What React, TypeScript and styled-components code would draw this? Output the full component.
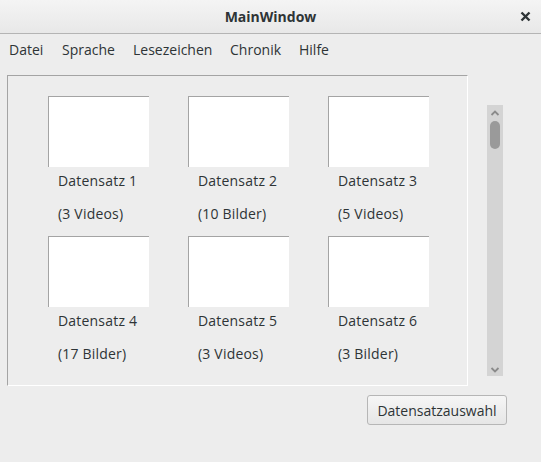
import React from "react";
import styled, { createGlobalStyle } from "styled-components";

const Global = createGlobalStyle`
  html, body { margin: 0; padding: 0; background: #ededed; }
  body { font-family: "Open Sans", "Noto Sans", sans-serif; color: #2e3436; }
  * { box-sizing: border-box; }
`;

const Window = styled.div`
  width: 541px;
  height: 462px;
  background: #ededed;
  display: flex;
  flex-direction: column;
  overflow: hidden;
`;

const TitleBar = styled.div`
  height: 34px;
  border-bottom: 1px solid #b4b4b4;
  background: linear-gradient(#f4f4f4, #e8e8e8);
  display: flex;
  align-items: center;
  justify-content: center;
  position: relative;
  font-weight: 700;
  font-size: 14px;
  color: #2e3436;
`;

const Close = styled.div`
  position: absolute;
  right: 10px;
  top: 9px;
  width: 12px;
  height: 14px;
  display: flex;
  align-items: center;
  justify-content: center;
`;

const MenuBar = styled.div`
  height: 31px;
  display: flex;
  align-items: center;
  padding-left: 9px;
  font-size: 14px;
`;

const MenuItem = styled.span<{ $w: number }>`
  width: ${(p) => p.$w}px;
  white-space: nowrap;
`;

const Main = styled.div`
  display: flex;
  flex-direction: column;
  padding: 10px 0 0 7px;
`;

const Row = styled.div`
  display: flex;
  align-items: flex-start;
`;

const Frame = styled.div`
  width: 461px;
  height: 311px;
  border-top: 1px solid #a4a4a4;
  border-left: 1px solid #a4a4a4;
  border-right: 1px solid #ffffff;
  border-bottom: 1px solid #ffffff;
  overflow: hidden;
  padding: 20px 0 0 40px;
`;

const Grid = styled.div`
  display: grid;
  grid-template-columns: repeat(3, 140px);
  grid-auto-rows: 140px;
`;

const Cell = styled.div`
  display: flex;
  flex-direction: column;
`;

const Thumb = styled.div`
  width: 101px;
  height: 71px;
  background: #fff;
  border-top: 1px solid #a4a4a4;
  border-left: 1px solid #a4a4a4;
`;

const Label = styled.div`
  font-size: 14px;
  line-height: 20px;
  padding-left: 10px;
  margin-top: 4px;
  letter-spacing: 0.2px;
  white-space: nowrap;
`;

const SubLabel = styled(Label)`
  margin-top: 13px;
`;

const ScrollBar = styled.div`
  margin-left: 19px;
  margin-top: 30px;
  width: 16px;
  height: 271px;
  background: #d4d4d4;
  display: flex;
  flex-direction: column;
  align-items: center;
  justify-content: space-between;
  padding: 5px 0 3px;
`;

const Thumbbar = styled.div`
  width: 10px;
  height: 28px;
  border-radius: 5px;
  background: #9a9a9a;
  margin-top: 5px;
`;

const Top = styled.div`
  display: flex;
  flex-direction: column;
  align-items: center;
`;

const ButtonRow = styled.div`
  display: flex;
  justify-content: flex-end;
  padding-right: 34px;
  margin-top: 9px;
`;

const Button = styled.button`
  height: 30px;
  width: 140px;
  border: 1px solid #b6b6b6;
  border-radius: 3px;
  background: linear-gradient(#f6f6f6, #e6e6e6);
  font-family: "Open Sans", "Noto Sans", sans-serif;
  font-size: 14px;
  color: #2e3436;
  padding: 0;
`;

const items = [
  ["Datensatz 1", "(3 Videos)"],
  ["Datensatz 2", "(10 Bilder)"],
  ["Datensatz 3", "(5 Videos)"],
  ["Datensatz 4", "(17 Bilder)"],
  ["Datensatz 5", "(3 Videos)"],
  ["Datensatz 6", "(3 Bilder)"],
];

const menus: [string, number][] = [
  ["Datei", 53],
  ["Sprache", 71],
  ["Lesezeichen", 97],
  ["Chronik", 69],
  ["Hilfe", 40],
];

export default function App() {
  return (
    <Window>
      <Global />
      <TitleBar>
        MainWindow
        <Close>
          <svg width="11" height="11" viewBox="0 0 11 11">
            <path d="M1.5 1.5 L9.5 9.5 M9.5 1.5 L1.5 9.5" stroke="#2e3436" strokeWidth="2.4" />
          </svg>
        </Close>
      </TitleBar>
      <MenuBar>
        {menus.map(([m, w]) => (
          <MenuItem key={m} $w={w}>
            {m}
          </MenuItem>
        ))}
      </MenuBar>
      <Main>
        <Row>
          <Frame>
            <Grid>
              {items.map(([a, b]) => (
                <Cell key={a}>
                  <Thumb />
                  <Label>{a}</Label>
                  <SubLabel>{b}</SubLabel>
                </Cell>
              ))}
            </Grid>
          </Frame>
          <ScrollBar>
            <Top>
              <svg width="10" height="6" viewBox="0 0 10 6">
                <path d="M1.5 5 L5 1.5 L8.5 5" stroke="#8a8a8a" strokeWidth="1.8" fill="none" />
              </svg>
              <Thumbbar />
            </Top>
            <svg width="10" height="6" viewBox="0 0 10 6">
              <path d="M1.5 1 L5 4.5 L8.5 1" stroke="#8a8a8a" strokeWidth="1.8" fill="none" />
            </svg>
          </ScrollBar>
        </Row>
        <ButtonRow>
          <Button>Datensatzauswahl</Button>
        </ButtonRow>
      </Main>
    </Window>
  );
}
